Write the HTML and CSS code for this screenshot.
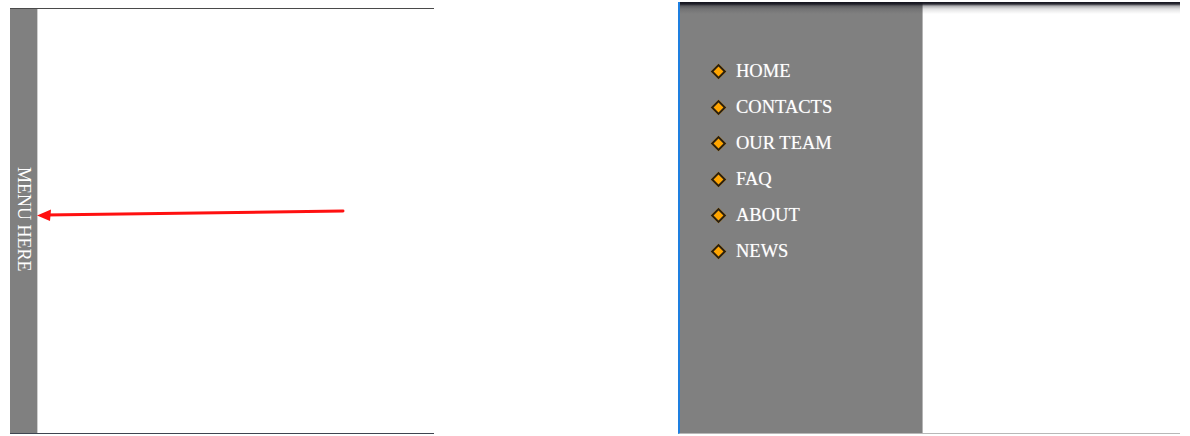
FILE: index.html
```html
<!DOCTYPE html>
<html>
<head>
<meta charset="utf-8">
<link rel="stylesheet" href="styles.css">
</head>
<body>
<div class="page">
  <div class="shot shot-closed">
    <div class="rail"><span class="rail-label">MENU HERE</span></div>
    <div class="content"></div>
    <svg class="arrow" width="320" height="20" viewBox="0 0 320 20">
      <line x1="306" y1="5" x2="8" y2="9" stroke="#ff1010" stroke-width="3" stroke-linecap="round"/>
      <polygon points="0,9.5 14,3.5 13,15" fill="#ff1010"/>
    </svg>
  </div>
  <div class="shot shot-open">
    <div class="drawer">
      <ul class="menu">
        <li><span class="bullet"></span>HOME</li>
        <li><span class="bullet"></span>CONTACTS</li>
        <li><span class="bullet"></span>OUR TEAM</li>
        <li><span class="bullet"></span>FAQ</li>
        <li><span class="bullet"></span>ABOUT</li>
        <li><span class="bullet"></span>NEWS</li>
      </ul>
    </div>
    <div class="content"></div>
    <div class="shade"></div>
  </div>
</div>
</body>
</html>
```

FILE: styles.css
```css
html, body {
  margin: 0;
  padding: 0;
  background: #ffffff;
}

.page {
  display: flex;
  align-items: flex-start;
  height: 436px;
  font-family: "Liberation Serif", "Times New Roman", serif;
}

.shot {
  position: relative;
  display: flex;
  box-sizing: border-box;
}

.shot-closed {
  margin: 8px 0 0 10px;
  width: 424px;
  height: 426px;
  border-top: 1px solid #4a4a4a;
  border-bottom: 1px solid #3f4550;
}

.rail {
  width: 27px;
  background: #808080;
  border-right: 1px solid #cfcfcf;
  display: flex;
  align-items: center;
  justify-content: center;
}

.rail-label {
  writing-mode: vertical-rl;
  color: #ffffff;
  font-size: 18px;
  line-height: 1;
  margin-top: -3px;
  white-space: nowrap;
}

.content {
  flex: 1;
  background: #ffffff;
}

.arrow {
  position: absolute;
  left: 27px;
  top: 197px;
}

.shot-open {
  margin: 2px 0 0 244px;
  width: 502px;
  height: 432px;
  border-left: 2px solid #1e7fe0;
  border-bottom: 1px solid #b8b8b8;
}

.drawer {
  width: 242px;
  background: #808080;
  border-right: 1px solid #b5b5b5;
}

.shade {
  position: absolute;
  left: 0;
  right: 0;
  top: 0;
  height: 12px;
  background: linear-gradient(to bottom, rgba(20,20,30,1) 0px, rgba(20,20,30,0.9) 2px, rgba(20,20,30,0.35) 4px, rgba(20,20,30,0.12) 7px, rgba(20,20,30,0) 12px);
  pointer-events: none;
}

.menu {
  list-style: none;
  margin: 51px 0 0 0;
  padding: 0 0 0 32px;
}

.menu li {
  display: flex;
  align-items: center;
  height: 36px;
  color: #ffffff;
  font-size: 18.5px;
  text-shadow: 0 0 1px rgba(255,255,255,0.5);
}

.bullet {
  width: 7px;
  height: 7px;
  background: #ffa500;
  border: 2px solid #2a2010;
  transform: rotate(45deg);
  margin: 0 12px 0 1px;
  flex: none;
}
```
